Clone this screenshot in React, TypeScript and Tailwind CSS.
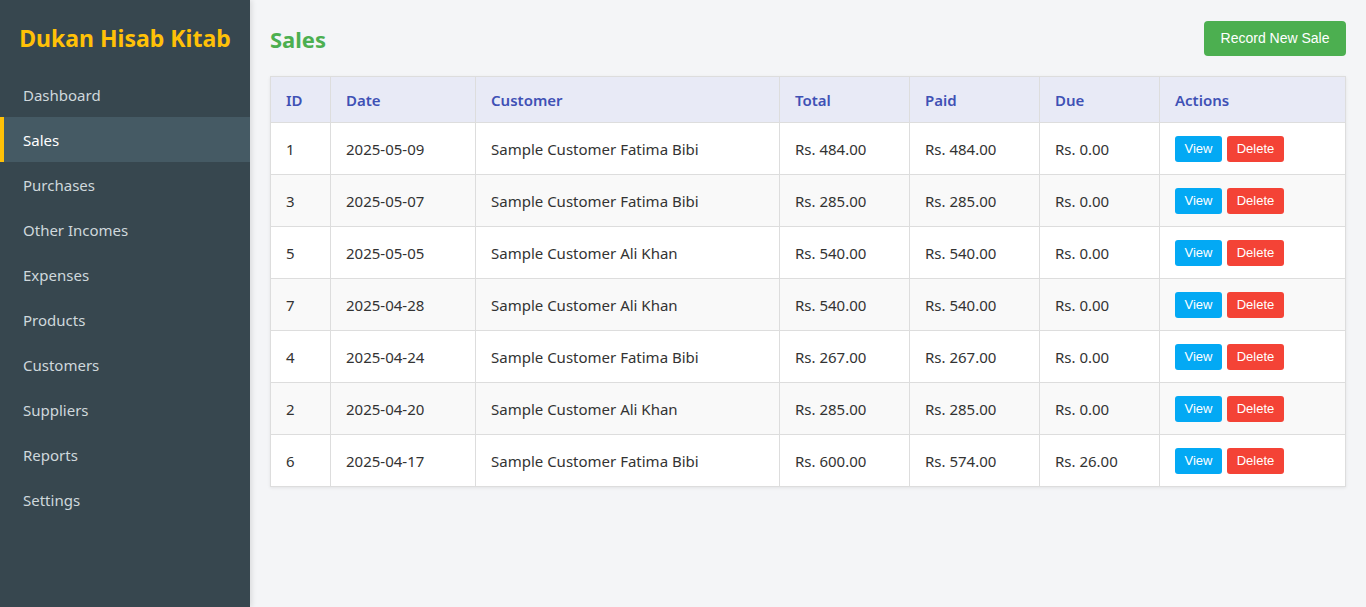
import React from "react";

const rows = [
  ["1", "2025-05-09", "Sample Customer Fatima Bibi", "Rs. 484.00", "Rs. 484.00", "Rs. 0.00"],
  ["3", "2025-05-07", "Sample Customer Fatima Bibi", "Rs. 285.00", "Rs. 285.00", "Rs. 0.00"],
  ["5", "2025-05-05", "Sample Customer Ali Khan", "Rs. 540.00", "Rs. 540.00", "Rs. 0.00"],
  ["7", "2025-04-28", "Sample Customer Ali Khan", "Rs. 540.00", "Rs. 540.00", "Rs. 0.00"],
  ["4", "2025-04-24", "Sample Customer Fatima Bibi", "Rs. 267.00", "Rs. 267.00", "Rs. 0.00"],
  ["2", "2025-04-20", "Sample Customer Ali Khan", "Rs. 285.00", "Rs. 285.00", "Rs. 0.00"],
  ["6", "2025-04-17", "Sample Customer Fatima Bibi", "Rs. 600.00", "Rs. 574.00", "Rs. 26.00"],
];

const nav = ["Dashboard", "Sales", "Purchases", "Other Incomes", "Expenses", "Products", "Customers", "Suppliers", "Reports", "Settings"];

const widths = ["w-[60px]", "w-[145px]", "w-[304px]", "w-[130px]", "w-[130px]", "w-[120px]", ""];
const heads = ["ID", "Date", "Customer", "Total", "Paid", "Due", "Actions"];

export default function App() {
  return (
    <div className="flex h-[607px] w-[1366px] overflow-hidden bg-[#f4f5f7] font-['Noto_Sans',sans-serif]">
      <aside className="z-10 flex w-[250px] shrink-0 flex-col bg-[#37474f] shadow-[2px_0_5px_rgba(0,0,0,0.1)]">
        <div className="flex h-[72px] items-center justify-center pt-[4px] text-[23px] font-bold text-[#ffc107]">
          Dukan Hisab Kitab
        </div>
        <nav className="flex flex-col">
          {nav.map((n) => (
            <div
              key={n}
              className={
                n === "Sales"
                  ? "flex h-[45px] items-center border-l-4 border-[#ffc107] bg-[#455a64] pl-[19px] pt-[2px] text-[15px] text-white"
                  : "flex h-[45px] items-center pl-[23px] pt-[2px] text-[15px] text-[#cfd8dc]"
              }
            >
              {n}
            </div>
          ))}
        </nav>
      </aside>
      <main className="flex-1 px-[20px] pt-[20px]">
        <div className="flex h-[36px] items-center justify-between">
          <h1 className="pt-[2px] text-[22px] font-bold text-[#4caf50]">Sales</h1>
          <button className="h-[35px] w-[142px] rounded-[4px] bg-[#4caf50] font-['Liberation_Sans',sans-serif] text-[14px] text-white">
            Record New Sale
          </button>
        </div>
        <table className="mt-[20px] w-[1076px] border-collapse bg-white shadow-[0_1px_3px_rgba(0,0,0,0.08)]">
          <thead>
            <tr className="h-[46px] bg-[#e8eaf6]">
              {heads.map((h, i) => (
                <th
                  key={h}
                  className={`${widths[i]} border border-[#dddddd] px-[15px] pt-[2px] text-left text-[15px] font-semibold text-[#3f51b5]`}
                >
                  {h}
                </th>
              ))}
            </tr>
          </thead>
          <tbody>
            {rows.map((r, ri) => (
              <tr key={ri} className={`h-[52px] ${ri % 2 === 1 ? "bg-[#f9f9f9]" : "bg-white"}`}>
                {r.map((c, ci) => (
                  <td key={ci} className="border border-[#dddddd] px-[15px] pt-[2px] text-[15px] text-[#333333]">
                    {c}
                  </td>
                ))}
                <td className="border border-[#dddddd] px-[15px]">
                  <div className="flex gap-[5px] font-['Liberation_Sans',sans-serif] text-[13px] text-white">
                    <button className="h-[26px] w-[47px] rounded-[3px] bg-[#03a9f4]">View</button>
                    <button className="h-[26px] w-[57px] rounded-[3px] bg-[#f44336]">Delete</button>
                  </div>
                </td>
              </tr>
            ))}
          </tbody>
        </table>
      </main>
    </div>
  );
}
